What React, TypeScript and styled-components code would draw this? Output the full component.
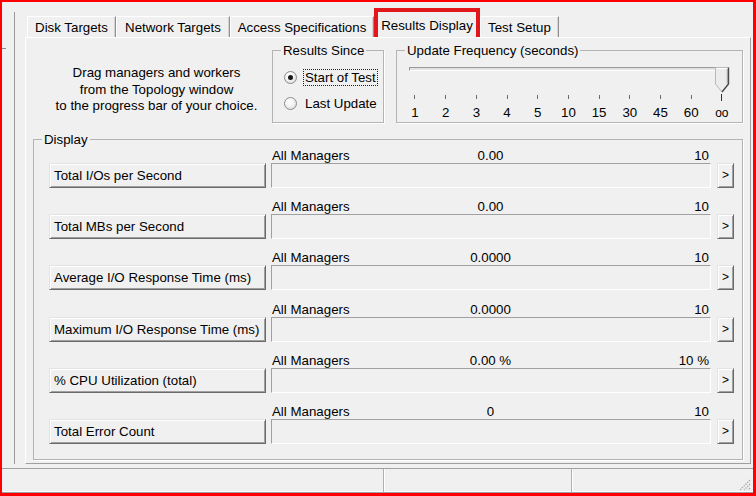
import React from 'react';
import styled, { createGlobalStyle } from 'styled-components';

const Global = createGlobalStyle`
  html, body { margin: 0; padding: 0; background: #f0f0f0; }
  body { font-family: "Liberation Sans", Arial, sans-serif; font-size: 13.3px; color: #000; }
  * { box-sizing: border-box; }
`;

const Frame = styled.div`
  width: 756px;
  height: 496px;
  border: 2px solid #ff0000;
  border-right-width: 3px;
  border-bottom-width: 3px;
  background: #f0f0f0;
  display: flex;
  flex-direction: column;
  overflow: hidden;
`;

const Main = styled.div`
  height: 465px;
  display: flex;
`;

const LeftStrip = styled.div`
  width: 13px;
  margin: 10px 0 3px 0;
  border-right: 1px solid #9a9a9a;
  display: flex;
  flex-direction: column;
`;

const StripTick = styled.div`
  margin-top: 36px;
  width: 4px;
  height: 1px;
  background: #8c8c8c;
`;

const TabArea = styled.div`
  flex: 1;
  margin: 0 2px 3px 10px;
  display: flex;
  flex-direction: column;
`;

const TabStrip = styled.div`
  height: 35px;
  display: flex;
  align-items: flex-end;
  padding-left: 2px;
`;

const Tab = styled.div<{ $w: number }>`
  width: ${p => p.$w}px;
  height: 21px;
  display: flex;
  align-items: center;
  justify-content: center;
  white-space: nowrap;
  border-top: 1px solid #ffffff;
  border-left: 1px solid #ffffff;
  border-right: 1px solid #8f8f8f;
  box-shadow: inset -1px 0 0 #d4d4d4;
`;

const ActiveTab = styled.div<{ $w: number }>`
  width: ${p => p.$w}px;
  height: 29px;
  display: flex;
  align-items: center;
  justify-content: center;
  white-space: nowrap;
  border: 4px solid #e3161c;
  border-bottom: none;
  padding-top: 1px;
`;

const Panel = styled.div`
  flex: 1;
  border-top: 1px solid #ffffff;
  border-left: 1px solid #ffffff;
  border-right: 1px solid #a0a0a0;
  border-bottom: 1px solid #a0a0a0;
  display: flex;
  flex-direction: column;
`;

const TopSection = styled.div`
  display: flex;
  padding-top: 4px;
`;

const Description = styled.div`
  width: 231px;
  margin-left: 15px;
  margin-top: 23px;
  text-align: center;
  line-height: 16.5px;
  white-space: nowrap;
`;

const Group = styled.fieldset<{ $w: number; $h: number; $ml: number; $mt?: number }>`
  margin: ${p => p.$mt ?? 0}px 0 0 ${p => p.$ml}px;
  padding: 0;
  min-width: 0;
  width: ${p => p.$w}px;
  height: ${p => p.$h}px;
  border: 1px solid #b4b4b4;
  box-shadow: 1px 1px 0 #ffffff;
`;

const Legend = styled.legend`
  margin-left: 8px;
  padding: 2px 2px 0 2px;
  line-height: 14px;
`;

const RadioList = styled.div`
  display: flex;
  flex-direction: column;
  padding: 6px 0 0 11px;
`;

const RadioRow = styled.div`
  height: 26px;
  display: flex;
  align-items: center;
  gap: 6px;
`;

const RadioCircle = styled.span<{ $checked?: boolean }>`
  flex: none;
  width: 13px;
  height: 13px;
  border-radius: 50%;
  border: 1px solid #8c8c8c;
  background: radial-gradient(circle at 40% 35%, #ffffff 0%, #f2f2f2 45%, #d2d2d2 100%);
  display: flex;
  align-items: center;
  justify-content: center;
  &::after {
    content: '';
    width: 5px;
    height: 5px;
    border-radius: 50%;
    background: #1a1a1a;
    display: ${p => (p.$checked ? 'block' : 'none')};
  }
`;

const RadioLabel = styled.span<{ $focus?: boolean }>`
  line-height: 15px;
  padding: 0 1px;
  border: 1px dotted ${p => (p.$focus ? '#202020' : 'transparent')};
  white-space: nowrap;
`;

const SliderZone = styled.div`
  position: relative;
  height: 25px;
  width: 319px;
  margin: 4px 0 0 12px;
`;

const Track = styled.div`
  margin-top: 9px;
  width: 309px;
  height: 4px;
  border-top: 1px solid #9a9a9a;
  border-left: 1px solid #9a9a9a;
  border-bottom: 1px solid #ffffff;
  border-right: 1px solid #ffffff;
  background: #e2e2e2;
`;

const Thumb = styled.svg`
  position: absolute;
  left: 306px;
  top: 0;
`;

const TickRow = styled.div`
  display: flex;
  margin: 3px 0 0 2.65px;
  height: 4px;
`;

const TickCell = styled.div`
  width: 30.7px;
  display: flex;
  justify-content: center;
`;

const TickMark = styled.div<{ $long?: boolean }>`
  width: 1px;
  height: ${p => (p.$long ? 7 : 4)}px;
  margin-top: ${p => (p.$long ? -1 : 0)}px;
  background: ${p => (p.$long ? '#303030' : '#6a6a6a')};
`;

const TickLabels = styled.div`
  display: flex;
  margin: 6px 0 0 2.65px;
  line-height: 16px;
`;

const TickLabel = styled.div<{ $small?: boolean }>`
  width: 30.7px;
  text-align: center;
  font-size: ${p => (p.$small ? '12px' : 'inherit')};
`;

const Rows = styled.div`
  display: flex;
  flex-direction: column;
  padding: 0 0 0 15px;
`;

const Row = styled.div`
  height: 51.2px;
  display: grid;
  grid-template-columns: 217px 440px 18px;
  grid-template-rows: 16px 25px;
  column-gap: 5px;
`;

const MetricButton = styled.div`
  grid-column: 1;
  grid-row: 2;
  display: flex;
  align-items: center;
  padding-left: 4px;
  white-space: nowrap;
  border: 1px solid;
  border-color: #e3e3e3 #6a6a6a #6a6a6a #e3e3e3;
  box-shadow: inset 1px 1px 0 #ffffff, inset -1px -1px 0 #a0a0a0;
  background: #f0f0f0;
`;

const BarLabels = styled.div`
  grid-column: 2;
  grid-row: 1;
  display: grid;
  grid-template-columns: 1fr auto 1fr;
  padding: 1px 2px 0 1px;
  line-height: 16px;
  white-space: nowrap;
`;

const LabelEnd = styled.span`
  justify-self: end;
`;

const Bar = styled.div`
  grid-column: 2;
  grid-row: 2;
  border: 1px solid;
  border-color: #a0a0a0 #ffffff #ffffff #a0a0a0;
  background: #f0f0f0;
`;

const ArrowButton = styled.div`
  grid-column: 3;
  grid-row: 2;
  margin-left: 1px;
  display: flex;
  align-items: center;
  justify-content: center;
  border: 1px solid;
  border-color: #e3e3e3 #6a6a6a #6a6a6a #e3e3e3;
  box-shadow: inset 1px 1px 0 #ffffff, inset -1px -1px 0 #a0a0a0;
  background: #f0f0f0;
  font-size: 12px;
  padding-bottom: 1px;
`;

const StatusBar = styled.div`
  height: 25px;
  margin-top: 1px;
  border-top: 1px solid #a0a0a0;
  border-bottom: 1px solid #a0a0a0;
  box-shadow: inset 0 -1px 0 #ffffff;
  display: flex;
`;

const Pane = styled.div<{ $w?: number; $sep?: boolean }>`
  ${p => (p.$w ? `width: ${p.$w}px;` : 'flex: 1;')}
  ${p => (p.$sep ? 'border-left: 1px solid #b0b0b0; box-shadow: inset 1px 0 0 #ffffff;' : '')}
  display: flex;
  justify-content: flex-end;
  align-items: flex-end;
  padding: 0 2px 1px 0;
`;

const tabs = [
  { label: 'Disk Targets', w: 89 },
  { label: 'Network Targets', w: 114 },
  { label: 'Access Specifications', w: 144 },
  { label: 'Results Display', w: 106, active: true },
  { label: 'Test Setup', w: 79 },
];

const ticks = ['1', '2', '3', '4', '5', '10', '15', '30', '45', '60', 'oo'];

const metrics = [
  { name: 'Total I/Os per Second', v: '0.00', max: '10' },
  { name: 'Total MBs per Second', v: '0.00', max: '10' },
  { name: 'Average I/O Response Time (ms)', v: '0.0000', max: '10' },
  { name: 'Maximum I/O Response Time (ms)', v: '0.0000', max: '10' },
  { name: '% CPU Utilization (total)', v: '0.00 %', max: '10 %' },
  { name: 'Total Error Count', v: '0', max: '10' },
];

export default function App() {
  return (
    <>
      <Global />
      <Frame>
        <Main>
          <LeftStrip>
            <StripTick />
          </LeftStrip>
          <TabArea>
            <TabStrip>
              {tabs.map(t =>
                t.active ? (
                  <ActiveTab key={t.label} $w={t.w}>{t.label}</ActiveTab>
                ) : (
                  <Tab key={t.label} $w={t.w}>{t.label}</Tab>
                )
              )}
            </TabStrip>
            <Panel>
              <TopSection>
                <Description>
                  Drag managers and workers
                  <br />
                  from the Topology window
                  <br />
                  to the progress bar of your choice.
                </Description>
                <Group $w={112} $h={81} $ml={0}>
                  <Legend>Results Since</Legend>
                  <RadioList>
                    <RadioRow>
                      <RadioCircle $checked />
                      <RadioLabel $focus>Start of Test</RadioLabel>
                    </RadioRow>
                    <RadioRow>
                      <RadioCircle />
                      <RadioLabel>Last Update</RadioLabel>
                    </RadioRow>
                  </RadioList>
                </Group>
                <Group $w={347} $h={81} $ml={12}>
                  <Legend>Update Frequency (seconds)</Legend>
                  <SliderZone>
                    <Track />
                    <Thumb width="15" height="26" viewBox="0 0 15 26">
                      <path d="M0.5 0.5 H13.5 V17 L7 25 L0.5 17 Z" fill="#ececec" stroke="#b8b8b8" strokeWidth="1" />
                      <path d="M1.5 1.5 H12.5" stroke="#ffffff" strokeWidth="1" />
                      <path d="M13.5 0.5 V17 L7 25" fill="none" stroke="#4a4a4a" strokeWidth="1.4" />
                      <path d="M12.3 2 V16.6" stroke="#9a9a9a" strokeWidth="1" />
                    </Thumb>
                  </SliderZone>
                  <TickRow>
                    {ticks.map((t, i) => (
                      <TickCell key={t}>
                        <TickMark $long={i === ticks.length - 1} />
                      </TickCell>
                    ))}
                  </TickRow>
                  <TickLabels>
                    {ticks.map(t => (
                      <TickLabel key={t} $small={t === 'oo'}>{t}</TickLabel>
                    ))}
                  </TickLabels>
                </Group>
              </TopSection>
              <Group $w={710} $h={329} $ml={7} $mt={8}>
                <Legend>Display</Legend>
                <Rows>
                  {metrics.map(m => (
                    <Row key={m.name}>
                      <BarLabels>
                        <span>All Managers</span>
                        <span>{m.v}</span>
                        <LabelEnd>{m.max}</LabelEnd>
                      </BarLabels>
                      <MetricButton>{m.name}</MetricButton>
                      <Bar />
                      <ArrowButton>&gt;</ArrowButton>
                    </Row>
                  ))}
                </Rows>
              </Group>
            </Panel>
          </TabArea>
        </Main>
        <StatusBar>
          <Pane $w={381} />
          <Pane $w={188} $sep />
          <Pane $sep>
            <svg width="13" height="13" viewBox="0 0 13 13">
              <path d="M12 2 L2 12 M12 6 L6 12 M12 10 L10 12" stroke="#a6a6a6" strokeWidth="1.2" strokeDasharray="1.5 1" />
            </svg>
          </Pane>
        </StatusBar>
      </Frame>
    </>
  );
}
